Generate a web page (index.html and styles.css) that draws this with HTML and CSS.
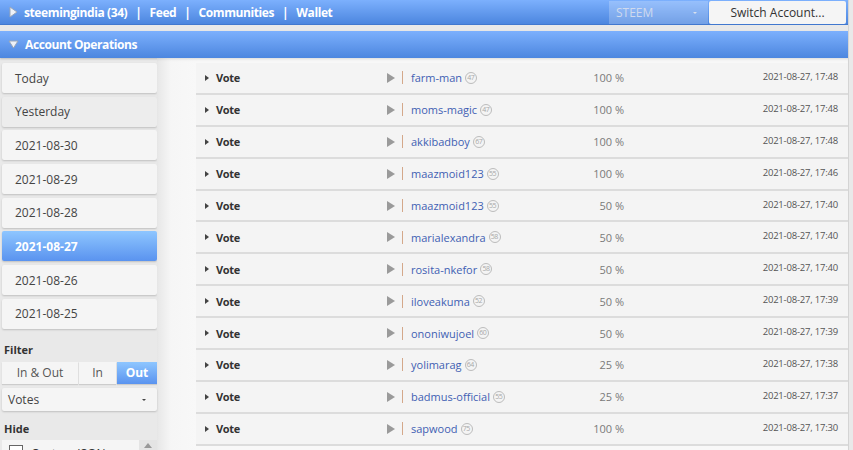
FILE: index.html
```html
<!DOCTYPE html>
<html>
<head>
<meta charset="utf-8">
<link rel="stylesheet" href="styles.css">
</head>
<body>
<div class="page">
  <div class="topbar">
    <div class="nav">
      <svg class="tri-right" width="9" height="12" viewBox="0 0 9 12"><path d="M1 1 L8 6 L1 11 Z" fill="#eef2f8" stroke="#9aa6b8" stroke-width="1"/></svg>
      <span>steemingindia (34)</span><span class="bar">|</span><span>Feed</span><span class="bar">|</span><span>Communities</span><span class="bar">|</span><span>Wallet</span>
    </div>
    <div class="chain">STEEM<span class="caret-s"></span></div>
    <div class="switch">Switch Account...</div>
  </div>
  <div class="opsbar">
    <svg class="tri-down" width="11" height="9" viewBox="0 0 11 9"><path d="M1 1 L10 1 L5.5 8 Z" fill="#eef2f8" stroke="#9aa6b8" stroke-width="1"/></svg>
    <span>Account Operations</span>
  </div>
  <div class="main">
    <div class="sidebar">
      <div class="days">
        <div class="day">Today</div>
        <div class="day hover">Yesterday</div>
        <div class="day">2021-08-30</div>
        <div class="day">2021-08-29</div>
        <div class="day">2021-08-28</div>
        <div class="day active">2021-08-27</div>
        <div class="day">2021-08-26</div>
        <div class="day">2021-08-25</div>
      </div>
      <div class="label filter-label">Filter</div>
      <div class="seg">
        <div class="seg-item w1">In &amp; Out</div>
        <div class="seg-item w2">In</div>
        <div class="seg-item w3 on">Out</div>
      </div>
      <div class="select">Votes<span class="caret-d"></span></div>
      <div class="label hide-label">Hide</div>
      <div class="listbox">
        <div class="list">
          <span class="cb"></span><span class="cb-text">Custom JSON</span>
        </div>
        <div class="scroll"><span class="up"></span></div>
      </div>
    </div>
    <div class="content">
      <div class="rows">
        <div class="row"><span class="caret"></span><span class="type">Vote</span><span class="play"></span><span class="sep"></span><span class="who"><span class="user">farm-man</span><span class="rep">47</span></span><span class="pct">100 %</span><span class="date">2021-08-27, 17:48</span></div>
        <div class="row"><span class="caret"></span><span class="type">Vote</span><span class="play"></span><span class="sep"></span><span class="who"><span class="user">moms-magic</span><span class="rep">47</span></span><span class="pct">100 %</span><span class="date">2021-08-27, 17:48</span></div>
        <div class="row"><span class="caret"></span><span class="type">Vote</span><span class="play"></span><span class="sep"></span><span class="who"><span class="user">akkibadboy</span><span class="rep">67</span></span><span class="pct">100 %</span><span class="date">2021-08-27, 17:48</span></div>
        <div class="row"><span class="caret"></span><span class="type">Vote</span><span class="play"></span><span class="sep"></span><span class="who"><span class="user">maazmoid123</span><span class="rep">55</span></span><span class="pct">100 %</span><span class="date">2021-08-27, 17:46</span></div>
        <div class="row"><span class="caret"></span><span class="type">Vote</span><span class="play"></span><span class="sep"></span><span class="who"><span class="user">maazmoid123</span><span class="rep">55</span></span><span class="pct">50 %</span><span class="date">2021-08-27, 17:40</span></div>
        <div class="row"><span class="caret"></span><span class="type">Vote</span><span class="play"></span><span class="sep"></span><span class="who"><span class="user">marialexandra</span><span class="rep">58</span></span><span class="pct">50 %</span><span class="date">2021-08-27, 17:40</span></div>
        <div class="row"><span class="caret"></span><span class="type">Vote</span><span class="play"></span><span class="sep"></span><span class="who"><span class="user">rosita-nkefor</span><span class="rep">58</span></span><span class="pct">50 %</span><span class="date">2021-08-27, 17:40</span></div>
        <div class="row"><span class="caret"></span><span class="type">Vote</span><span class="play"></span><span class="sep"></span><span class="who"><span class="user">iloveakuma</span><span class="rep">52</span></span><span class="pct">50 %</span><span class="date">2021-08-27, 17:39</span></div>
        <div class="row"><span class="caret"></span><span class="type">Vote</span><span class="play"></span><span class="sep"></span><span class="who"><span class="user">ononiwujoel</span><span class="rep">60</span></span><span class="pct">50 %</span><span class="date">2021-08-27, 17:39</span></div>
        <div class="row"><span class="caret"></span><span class="type">Vote</span><span class="play"></span><span class="sep"></span><span class="who"><span class="user">yolimarag</span><span class="rep">64</span></span><span class="pct">25 %</span><span class="date">2021-08-27, 17:38</span></div>
        <div class="row"><span class="caret"></span><span class="type">Vote</span><span class="play"></span><span class="sep"></span><span class="who"><span class="user">badmus-official</span><span class="rep">55</span></span><span class="pct">25 %</span><span class="date">2021-08-27, 17:37</span></div>
        <div class="row"><span class="caret"></span><span class="type">Vote</span><span class="play"></span><span class="sep"></span><span class="who"><span class="user">sapwood</span><span class="rep">75</span></span><span class="pct">100 %</span><span class="date">2021-08-27, 17:30</span></div>
      </div>
    </div>
  </div>
</div>
</body>
</html>
```

FILE: styles.css
```css
html, body {
  margin: 0;
  padding: 0;
}
body {
  width: 853px;
  height: 450px;
  overflow: hidden;
  background: #e9e9e9;
  font-family: "Open Sans", "DejaVu Sans", sans-serif;
  color: #333;
}
.page {
  width: 848px;
  border-right: 1px solid #d4d4d4;
  height: 450px;
  overflow: hidden;
}
.topbar {
  height: 25px;
  display: flex;
  align-items: stretch;
  background: linear-gradient(#7cb0fd, #4c86df);
  border-bottom: 1px solid #4178cf;
  box-sizing: border-box;
}
.nav {
  flex: 1;
  display: flex;
  align-items: center;
  color: #fff;
  font-weight: bold;
  font-size: 12px;
  letter-spacing: -0.4px;
  padding-left: 9px;
}
.tri-right {
  margin-right: 6px;
}
.bar {
  margin: 0 8px;
}
.chain {
  width: 99px;
  margin: 1px 1px 0 0;
  background: rgba(255, 255, 255, 0.22);
  color: #cfdaee;
  font-size: 12px;
  display: flex;
  align-items: center;
  padding-left: 7px;
  box-sizing: border-box;
  position: relative;
}
.caret-s {
  position: absolute;
  right: 11px;
  top: 11px;
  border-left: 2px solid transparent;
  border-right: 2px solid transparent;
  border-top: 2px solid #d8e0ee;
}
.switch {
  width: 137px;
  margin: 1px 2px 0 0;
  background: #f5f5f5;
  border-radius: 2px;
  color: #333;
  font-size: 12px;
  display: flex;
  align-items: center;
  justify-content: center;
}
.opsbar {
  margin-top: 6px;
  height: 27px;
  display: flex;
  align-items: center;
  background: linear-gradient(#7cb0fd, #4c86df);
  color: #fff;
  font-weight: bold;
  font-size: 12px;
  letter-spacing: -0.4px;
  padding-left: 8px;
  box-shadow: 0 1px 2px rgba(0, 0, 0, 0.2);
}
.tri-down {
  margin-right: 6px;
}
.main {
  display: flex;
}
.sidebar {
  width: 155px;
  padding: 5px 0 0 2px;
  flex: none;
}
.days {
  display: flex;
  flex-direction: column;
  gap: 3.7px;
}
.day {
  height: 30px;
  background: #f5f5f5;
  border-radius: 2px;
  box-shadow: 0 1px 2px rgba(0, 0, 0, 0.18);
  font-size: 12px;
  color: #444;
  display: flex;
  align-items: center;
  padding-left: 13px;
}
.day.hover {
  background: #ededed;
}
.day.active {
  background: linear-gradient(#8ec6ff, #5a93ef);
  color: #fff;
  font-weight: bold;
}
.label {
  font-size: 11px;
  font-weight: bold;
  color: #333;
  padding-left: 2px;
}
.filter-label {
  margin-top: 12px;
  height: 17px;
  line-height: 17px;
}
.seg {
  display: flex;
  height: 22px;
  gap: 1px;
  margin-top: 4px;
}
.seg-item {
  background: #f5f5f5;
  font-size: 12px;
  color: #555;
  display: flex;
  align-items: center;
  justify-content: center;
  box-shadow: 0 1px 1px rgba(0, 0, 0, 0.12);
}
.seg-item.w1 { width: 76px; }
.seg-item.w2 { width: 37px; }
.seg-item.w3 { flex: 1; }
.seg-item.on {
  background: linear-gradient(#8ec6ff, #5a93ef);
  color: #fff;
  font-weight: bold;
}
.select {
  margin-top: 4px;
  height: 23px;
  background: #f5f5f5;
  border-radius: 2px;
  box-shadow: 0 1px 2px rgba(0, 0, 0, 0.18);
  font-size: 12px;
  color: #444;
  display: flex;
  align-items: center;
  padding-left: 6px;
  position: relative;
}
.caret-d {
  position: absolute;
  right: 11px;
  top: 11px;
  border-left: 2px solid transparent;
  border-right: 2px solid transparent;
  border-top: 2px solid #444;
}
.hide-label {
  margin-top: 9px;
  height: 17px;
  line-height: 17px;
}
.listbox {
  margin-top: 3px;
  display: flex;
  height: 30px;
}
.list {
  width: 137px;
  background: #f5f5f5;
  display: flex;
  align-items: flex-start;
  padding: 5px 0 0 7px;
  box-sizing: border-box;
  font-size: 12px;
}
.cb {
  width: 12px;
  height: 12px;
  border: 1px solid #666;
  background: #fff;
  margin-right: 8px;
}
.scroll {
  flex: 1;
  background: #e4e4e4;
  position: relative;
}
.up {
  position: absolute;
  left: 5px;
  top: 3px;
  border-left: 4px solid transparent;
  border-right: 4px solid transparent;
  border-bottom: 5px solid #999;
}
.content {
  flex: 1;
  background: linear-gradient(90deg, #e7e7e7 0px, #f6f6f6 14px, #f8f8f8 40px);
  padding-left: 39px;
  box-shadow: inset 0 3px 3px -2px rgba(0, 0, 0, 0.12);
  padding-top: 5px;
}
.rows {
  display: flex;
  flex-direction: column;
}
.row {
  height: 29.9px;
  border-bottom: 2px solid #dcdcdc;
  background: #f4f4f4;
  display: flex;
  align-items: center;
  padding-left: 9px;
  padding-right: 10px;
  font-size: 11px;
}
.caret {
  width: 0;
  height: 0;
  border-top: 3px solid transparent;
  border-bottom: 3px solid transparent;
  border-left: 4px solid #444;
  margin-right: 7px;
}
.type {
  font-weight: bold;
  color: #333;
  width: 171px;
  letter-spacing: -0.3px;
}
.play {
  width: 0;
  height: 0;
  border-top: 5px solid transparent;
  border-bottom: 5px solid transparent;
  border-left: 8px solid #9a9a9a;
  margin-right: 7px;
}
.sep {
  width: 1px;
  height: 13px;
  background: #d4a88a;
  margin-right: 8px;
}
.who {
  width: 160px;
  display: flex;
  align-items: center;
}
.user {
  color: #3f5fb3;
}
.rep {
  margin-left: 3px;
  width: 10px;
  height: 10px;
  border: 1px solid #bcbcbc;
  border-radius: 50%;
  font-size: 7px;
  line-height: 10px;
  color: #a8a8a8;
  text-align: center;
  letter-spacing: -0.5px;
  text-indent: -0.5px;
}
.pct {
  width: 53px;
  text-align: right;
  color: #7a7a7a;
}
.date {
  flex: 1;
  text-align: right;
  font-size: 9.5px;
  letter-spacing: -0.2px;
  color: #555;
  margin-top: -3px;
}
```
